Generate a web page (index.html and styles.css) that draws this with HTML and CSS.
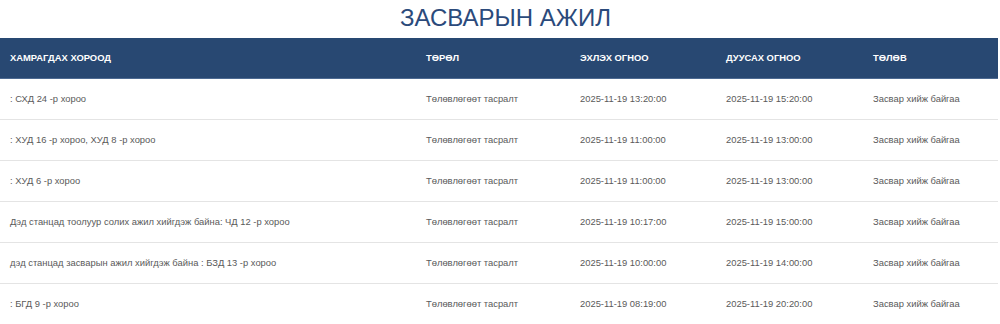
FILE: index.html
```html
<!DOCTYPE html>
<html lang="mn">
<head>
<meta charset="utf-8">
<link rel="stylesheet" href="styles.css">
</head>
<body>
<h1 class="title">ЗАСВАРЫН АЖИЛ</h1>
<table class="repairs">
  <colgroup>
    <col class="c1"><col class="c2"><col class="c3"><col class="c4"><col class="c5">
  </colgroup>
  <thead>
    <tr><th>Хамрагдах хороод</th><th>Төрөл</th><th>Эхлэх огноо</th><th>Дуусах огноо</th><th>Төлөв</th></tr>
  </thead>
  <tbody>
    <tr><td>: СХД 24 -р хороо</td><td>Төлөвлөгөөт тасралт</td><td>2025-11-19 13:20:00</td><td>2025-11-19 15:20:00</td><td>Засвар хийж байгаа</td></tr>
    <tr><td>: ХУД 16 -р хороо, ХУД 8 -р хороо</td><td>Төлөвлөгөөт тасралт</td><td>2025-11-19 11:00:00</td><td>2025-11-19 13:00:00</td><td>Засвар хийж байгаа</td></tr>
    <tr><td>: ХУД 6 -р хороо</td><td>Төлөвлөгөөт тасралт</td><td>2025-11-19 11:00:00</td><td>2025-11-19 13:00:00</td><td>Засвар хийж байгаа</td></tr>
    <tr><td>Дэд станцад тоолуур солих ажил хийгдэж байна: ЧД 12 -р хороо</td><td>Төлөвлөгөөт тасралт</td><td>2025-11-19 10:17:00</td><td>2025-11-19 15:00:00</td><td>Засвар хийж байгаа</td></tr>
    <tr><td>дэд станцад засварын ажил хийгдэж байна : БЗД 13 -р хороо</td><td>Төлөвлөгөөт тасралт</td><td>2025-11-19 10:00:00</td><td>2025-11-19 14:00:00</td><td>Засвар хийж байгаа</td></tr>
    <tr><td>: БГД 9 -р хороо</td><td>Төлөвлөгөөт тасралт</td><td>2025-11-19 08:19:00</td><td>2025-11-19 20:20:00</td><td>Засвар хийж байгаа</td></tr>
  </tbody>
</table>
</body>
</html>
```
FILE: styles.css
```css
html, body {
  margin: 0;
  padding: 0;
  background: #fff;
}
body {
  font-family: "Liberation Sans", Arial, sans-serif;
  color: #5a5a5a;
}
.title {
  margin: 0;
  height: 38px;
  padding-left: 11px;
  line-height: 36px;
  text-align: center;
  font-size: 24px;
  font-weight: normal;
  color: #2b4a7b;
}
.repairs {
  width: 998px;
  border-collapse: collapse;
  table-layout: fixed;
}
.c1 { width: 416px; }
.c2 { width: 154px; }
.c3 { width: 146px; }
.c4 { width: 147px; }
.c5 { width: 135px; }
.repairs th {
  background: #284872;
  color: #fff;
  font-size: 9.4px;
  font-weight: bold;
  text-transform: uppercase;
  text-align: left;
  height: 40px;
  padding: 0 10px;
  box-sizing: border-box;
  border-bottom: 1px solid #4d6a92;
}
.repairs td {
  font-size: 9.4px;
  height: 41px;
  padding: 0 10px;
  box-sizing: border-box;
  border-bottom: 1px solid #e4e4e4;
  white-space: nowrap;
}
```
